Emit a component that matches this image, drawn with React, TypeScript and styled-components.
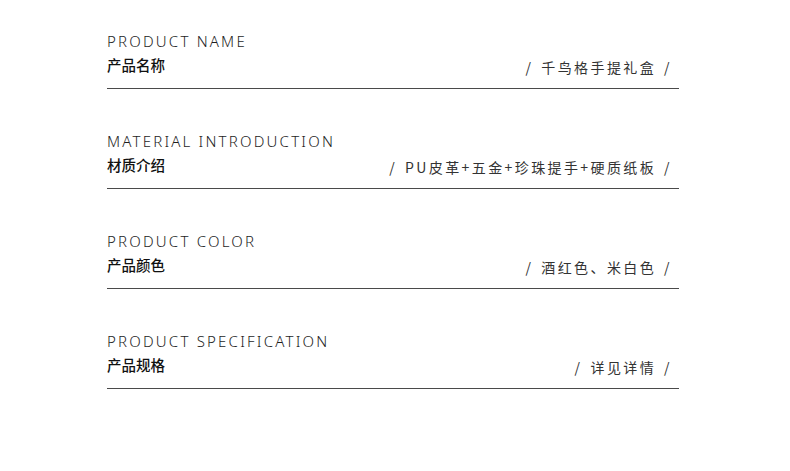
import React from 'react';
import styled, { createGlobalStyle } from 'styled-components';

const GlobalStyle = createGlobalStyle`
  html, body {
    margin: 0;
    padding: 0;
    background: #ffffff;
  }
  body {
    font-family: "Noto Sans CJK SC", "Noto Sans", sans-serif;
    color: #222;
  }
`;

const Page = styled.div`
  width: 790px;
  height: 471px;
  padding: 30px 0 0 107px;
  box-sizing: border-box;
  display: flex;
  flex-direction: column;
  gap: 41px;
`;

const Item = styled.section`
  width: 572px;
  height: 59px;
  box-sizing: border-box;
  border-bottom: 1px solid #4a4a4a;
`;

const English = styled.div`
  font-family: "Noto Sans", "Noto Sans CJK SC", sans-serif;
  font-size: 15px;
  font-weight: 300;
  letter-spacing: 2.2px;
  line-height: 22px;
  color: #1e1e1e;
`;

const Row = styled.div`
  display: flex;
  justify-content: space-between;
  align-items: center;
  padding-right: 7px;
`;

const Chinese = styled.div`
  font-size: 14.5px;
  font-weight: 500;
  line-height: 20px;
  color: #111;
`;

const Value = styled.div`
  font-size: 14px;
  line-height: 22px;
  letter-spacing: 2.4px;
  color: #333;
  margin-top: 4px;
  white-space: nowrap;
`;

const Slash = styled.span<{ $side: 'left' | 'right' }>`
  ${p => (p.$side === 'left' ? 'margin-right: 8px;' : 'margin-left: 8px;')}
`;

const items = [
  { en: 'PRODUCT NAME', zh: '产品名称', value: '千鸟格手提礼盒' },
  { en: 'MATERIAL INTRODUCTION', zh: '材质介绍', value: 'PU皮革+五金+珍珠提手+硬质纸板' },
  { en: 'PRODUCT COLOR', zh: '产品颜色', value: '酒红色、米白色' },
  { en: 'PRODUCT SPECIFICATION', zh: '产品规格', value: '详见详情' },
];

const App = () => {
  return (
    <>
      <GlobalStyle />
      <Page>
        {items.map(item => (
          <Item key={item.en}>
            <English>{item.en}</English>
            <Row>
              <Chinese>{item.zh}</Chinese>
              <Value>
                <Slash $side="left">/</Slash>
                {item.value}
                <Slash $side="right">/</Slash>
              </Value>
            </Row>
          </Item>
        ))}
      </Page>
    </>
  );
};

export default App;
